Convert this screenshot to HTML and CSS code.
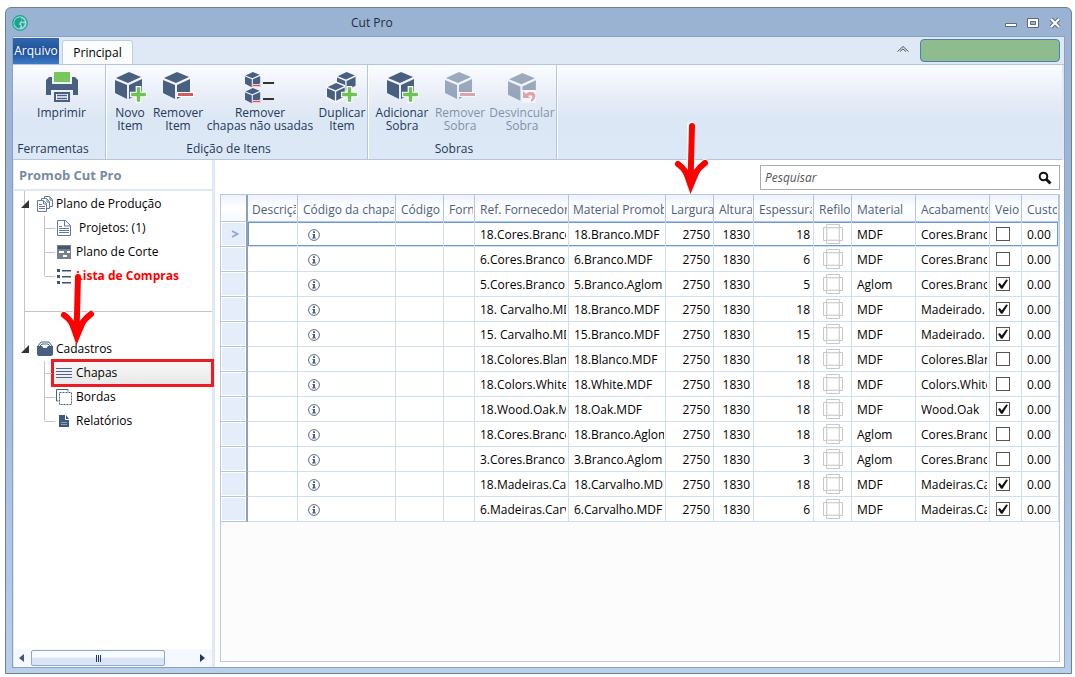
FILE: index.html
```html
<!DOCTYPE html>
<html lang="pt-BR">
<head>
<meta charset="utf-8">
<meta name="viewport" content="width=device-width, initial-scale=1">
<title>Cut Pro</title>
<link rel="stylesheet" href="styles.css">
</head>
<body>
<svg class="defs" aria-hidden="true">
  <symbol id="cube" viewBox="0 0 32 32"><path d="M1 6 14 0l12 5-13 6z"/><path d="M0 8l12 5v14L0 21z"/><path d="M14 13l13-6v13l-13 7z"/></symbol>
  <symbol id="plus" viewBox="0 0 15 15"><path d="M5 0h5v5h5v5h-5v5H5v-5H0V5h5z" fill="#fff"/><path d="M6 1h3v5h5v3H9v5H6V9H1V6h5z" fill="#71c255"/></symbol>
  <symbol id="info" viewBox="0 0 12 12"><circle cx="6" cy="6" r="5.4" fill="#fff" stroke="#5b6c8a"/><path d="M5 2.3h2v1.6H5zM4.2 5H7v3.6h.9v.9H4.1v-.9H5V5.8h-.8z" fill="#4f6180"/></symbol>
  <symbol id="trim" viewBox="0 0 20 20"><path d="M3.500 .5h13v19h-13zM.5 3.500h19v13H.5z" fill="none" stroke="#c8c8c8"/><path d="M4 4h12v12H4z" fill="#fff" stroke="#ddd"/></symbol>
  <symbol id="arrow" viewBox="0 0 34 74"><g fill="none" stroke-linecap="round" stroke-linejoin="round"><path d="M17 5L16.500 64M4 43c5 4 9 9 12.500 21C20 54 24 47 31 42" stroke="#fff" stroke-width="8"/><path d="M18 5L16.500 62M4 43c6 4 10 9 12.500 20C19 54 23 48 31 42" stroke="#f00" stroke-width="6"/></g><path d="M6 43l10.500 30L29 43 17 54z" fill="#f00"/></symbol>
</svg>
<div class="window">
  <header class="titlebar">
    <svg class="logo" viewBox="0 0 16 16"><circle cx="8" cy="8" r="7.300" fill="#a9d3d4" stroke="#13a58f" stroke-width="1.200"/><path d="M7 2.500c-3 .5-4.800 2.800-4.700 5.500.2 2.800 2.200 5 5 5.500l1.500-3-2-1 1-2 2-2.500-.8-2.500z" fill="#13a58f"/><path d="M9.500 3l3.500 3-3 1zM9 8l4 .5-2.500 4z" fill="#13a58f"/></svg>
    <h1 class="title">Cut Pro</h1>
    <div class="window-buttons">
      <button class="window-button" aria-label="Minimizar"><svg viewBox="0 0 14 12"><path d="M1.500 6.500h11v3h-11z" fill="#fff" stroke="#5c6b80"/></svg></button>
      <button class="window-button" aria-label="Maximizar"><svg viewBox="0 0 14 12"><path d="M1.500 1.500h11v9h-11z" fill="#fff" stroke="#5c6b80"/><path d="M4.500 4.500h5v3h-5z" fill="#9cb4d3" stroke="#5c6b80"/></svg></button>
      <button class="window-button" aria-label="Fechar"><svg viewBox="0 0 14 12"><path d="M3 2l8 8M11 2l-8 8" stroke="#5c6b80" stroke-width="4"/><path d="M3 2l8 8M11 2l-8 8" stroke="#fff" stroke-width="2.200"/></svg></button>
    </div>
  </header>
  <div class="client">
    <nav class="tabs">
      <button class="tab tab-file">Arquivo</button>
      <button class="tab tab-active">Principal</button>
      <button class="collapse" aria-label="Recolher faixa"><svg viewBox="0 0 14 8"><path d="M1.500 6.500L7 1.500l5.500 5M4 6.500l3-2.500 3 2.500" fill="none" stroke="#555"/></svg></button>
      <button class="account" aria-label="Conta"></button>
    </nav>
    <section class="ribbon">
      <div class="group group-tools">
        <div class="commands">
          <button class="command">
            <svg class="command-icon" viewBox="0 0 36 34"><path d="M10 1h16v10H10z" fill="#78c65c"/><path d="M5 6h3v7h20V6h3l3 3v15h-5v-5H7v5H2V9z" fill="#495f80"/><path d="M10 21h16v10H10z" fill="#495f80"/><path d="M12 23h12v6H12z" fill="#f4f7fc"/><path d="M13 24.500h10M13 27.500h10" stroke="#495f80" stroke-width="1.500"/></svg>
            <span>Imprimir</span></button>
        </div>
        <div class="group-label">Ferramentas</div>
      </div>
      <div class="group group-items">
        <div class="commands">
          <button class="command"><svg class="command-icon" viewBox="0 0 36 34"><use href="#cube" x="3" y="1" width="32" height="32"/><use href="#plus" x="18" y="15" width="17" height="17"/></svg><span>Novo<br>Item</span></button>
          <button class="command command-medium"><svg class="command-icon" viewBox="0 0 36 34"><use href="#cube" x="3" y="1" width="32" height="32"/><path d="M17 21h17v5H17z" fill="#fff"/><path d="M18 22h15v3H18z" fill="#d15c5c"/></svg><span>Remover<br>Item</span></button>
          <button class="command command-wide"><svg class="command-icon" viewBox="0 0 36 34"><use href="#cube" x="3" y="1" width="18" height="18"/><use href="#cube" x="3" y="17" width="18" height="18"/><path d="M10 13h9v3h-9zM10 29h9v3h-9z" fill="#f2c8cc"/><path d="M11 14h7v1h-7zM11 30h7v1h-7z" fill="#d15c5c"/><path d="M21 11h11v2H21zM21 27h11v2H21z" fill="#333"/></svg><span>Remover<br>chapas não usadas</span></button>
          <button class="command command-medium"><svg class="command-icon" viewBox="0 0 36 34"><use href="#cube" x="13" y="1" width="22" height="22"/><g fill="#f5f8fd"><path d="M2 15l9-5 10 4v14l-9 4-10-4z"/></g><use href="#cube" x="3" y="12" width="21" height="21"/><use href="#plus" x="17" y="15" width="17" height="17"/></svg><span>Duplicar<br>Item</span></button>
        </div>
        <div class="group-label">Edição de Itens</div>
      </div>
      <div class="group group-offcuts">
        <div class="commands">
          <button class="command command-large"><svg class="command-icon" viewBox="0 0 36 34"><use href="#cube" x="3" y="1" width="32" height="32"/><use href="#plus" x="18" y="15" width="17" height="17"/></svg><span>Adicionar<br>Sobra</span></button>
          <button class="command command-medium" disabled><svg class="command-icon" viewBox="0 0 36 34"><use href="#cube" x="3" y="1" width="32" height="32"/><path d="M17 21h17v5H17z" fill="#fff"/><path d="M18 22h15v3H18z" fill="#d15c5c"/></svg><span>Remover<br>Sobra</span></button>
          <button class="command command-xlarge" disabled><svg class="command-icon" viewBox="0 0 36 34"><use href="#cube" x="4" y="2" width="33" height="33"/><path d="M18 19h14v13H18z" fill="#fff"/><path d="M19 20v7h7l-2-2c4-2 6 1 3 4v2c6-3 6-11-1-10-2 0-3 1-4 2z" fill="#d15c5c"/></svg><span>Desvincular<br>Sobra</span></button>
        </div>
        <div class="group-label">Sobras</div>
      </div>
    </section>
    <div class="workspace">
      <aside class="sidebar">
        <h2 class="sidebar-title">Promob Cut Pro</h2>
        <div class="tree">
          <div class="branch">
            <a class="node node-root" href="#"><svg class="twisty" viewBox="0 0 8 8"><path d="M8 0v8H0z" fill="#333"/></svg><svg class="node-icon" viewBox="0 0 16 16"><g fill="#fff" stroke="#64799c"><path d="M7.500.5h5l3 3v7h-8z"/><path d="M4.500 2.500h5l3 3v7h-8z"/><path d="M.5 4.500h6l3 3v8h-9z"/><path d="M6.500 5v3h3M2 8.500h3M2 10.500h6M2 12.500h6M10 3v3h2.500M13 1v3h2.500" fill="none"/></g></svg><span>Plano de Produção</span></a>
            <div class="children">
              <a class="node node-spaced" href="#"><svg class="node-icon" viewBox="0 0 16 16"><path d="M1.500.5h8l5 5v10h-13z" fill="#fff" stroke="#64799c"/><path d="M8.500 1v5h6M3 6.500h3M3 8.500h10M3 10.500h10M3 12.500h10" fill="none" stroke="#64799c"/></svg><span>Projetos: (1)</span></a>
              <a class="node" href="#"><svg class="node-icon" viewBox="0 0 16 16"><path d="M1 1h14v14H1z" fill="#777f8b"/><path d="M2 2h12v3H2z" fill="#435574"/><path d="M3 7h5v2H3zM11 7h3v2h-3zM7 11h4v2H7z" fill="#fff"/></svg><span>Plano de Corte</span></a>
              <a class="node node-alert" href="#"><svg class="node-icon" viewBox="0 0 16 16"><path d="M1 1h3v3H1zM1 7h3v3H1zM1 13h3v3H1zM6 2h9v1.500H6zM6 8h9v1.500H6zM6 14h9v1.500H6z" fill="#40536f"/></svg><span>Lista de Compras</span><svg class="pointer pointer-list" aria-hidden="true"><use href="#arrow"/></svg></a>
            </div>
          </div>
          <hr class="tree-divider">
          <div class="branch branch-last">
            <a class="node node-root" href="#"><svg class="twisty" viewBox="0 0 8 8"><path d="M8 0v8H0z" fill="#333"/></svg><svg class="node-icon" viewBox="0 0 16 16"><path d="M1 5l3-4h8l3 4" fill="#fff" stroke="#495f80"/><path d="M3 5l2-2h6l2 2" fill="none" stroke="#495f80"/><path d="M0 5h5l1.500 2h3L11 5h5v8a2 2 0 0 1-2 2H2a2 2 0 0 1-2-2z" fill="#495f80"/></svg><span>Cadastros</span></a>
            <div class="children">
              <a class="node node-selected" href="#"><svg class="node-icon" viewBox="0 0 16 16"><path d="M0 3.500h16M0 6.500h16M0 9.500h16M0 12.500h16" stroke="#4b658c"/></svg><span>Chapas</span></a>
              <a class="node" href="#"><svg class="node-icon" viewBox="0 0 16 16"><path d="M3.500 3.500h12v12h-12z" fill="#fff" stroke="#495f80" stroke-dasharray="2 1"/><path d="M12 .5H.5V12h2M12 .5v2" fill="none" stroke="#495f80"/></svg><span>Bordas</span></a>
              <a class="node" href="#"><svg class="node-icon" viewBox="0 0 16 16"><path d="M3 2h6v5h4v7H3z" fill="#40587c"/><path d="M10 2l3 4h-3z" fill="#40587c"/><path d="M5 9.500h6M5 11.500h6" stroke="#8ea0bb"/></svg><span>Relatórios</span></a>
            </div>
          </div>
        </div>
        <div class="scrollbar">
          <button class="scroll-arrow" aria-label="Rolar para a esquerda"><svg viewBox="0 0 5 8"><path d="M5 0v8L0 4z" fill="#40587c"/></svg></button>
          <div class="scroll-track"><div class="scroll-thumb"><i></i><i></i><i></i></div></div>
          <button class="scroll-arrow" aria-label="Rolar para a direita"><svg viewBox="0 0 5 8"><path d="M0 0v8l5-4z" fill="#203a5f"/></svg></button>
        </div>
      </aside>
      <main class="content">
        <form class="search"><input class="search-input" id="search" type="text" placeholder="Pesquisar" aria-label="Pesquisar"><button class="search-button" type="button" aria-label="Buscar"><svg viewBox="0 0 14 14"><circle cx="5.500" cy="5.500" r="3.800" fill="none" stroke="#111" stroke-width="2"/><path d="M8.500 8.500l4 4" stroke="#111" stroke-width="3"/></svg></button></form>
        <div class="grid">
          <table class="sheet">
            <colgroup><col class="w-select"><col class="w-desc"><col class="w-sheet"><col class="w-code"><col class="w-supplier"><col class="w-ref"><col class="w-promob"><col class="w-code"><col class="w-height"><col class="w-thick"><col class="w-trim"><col class="w-material"><col class="w-finish"><col class="w-grain"><col></colgroup>
            <thead><tr><th></th><th class="tight">Descrição</th><th>Código da chapa</th><th>Código</th><th>Fornecedor</th><th>Ref. Fornecedor</th><th class="tight">Material Promob</th><th><span>Largura</span><svg class="pointer pointer-width" aria-hidden="true"><use href="#arrow"/></svg></th><th>Altura</th><th>Espessura</th><th>Refilo</th><th>Material</th><th>Acabamento</th><th>Veio</th><th>Custo</th></tr></thead>
            <tbody>
              <tr class="current"><th scope="row"><svg class="marker" viewBox="0 0 8 8"><path d="M1 1l5.500 3L1 7" fill="none" stroke="#8ea9cf" stroke-width="1.800"/></svg></th><td></td><td><svg class="info"><use href="#info"/></svg></td><td></td><td></td><td>18.Cores.Branco.MDF</td><td>18.Branco.MDF</td><td class="num">2750</td><td class="num">1830</td><td class="num">18</td><td class="mid"><svg class="trim"><use href="#trim"/></svg></td><td>MDF</td><td>Cores.Branco</td><td class="mid"><input class="tick" type="checkbox" aria-label="Veio"></td><td>0.00</td></tr>
              <tr><th scope="row"></th><td></td><td><svg class="info"><use href="#info"/></svg></td><td></td><td></td><td>6.Cores.Branco.MDF</td><td>6.Branco.MDF</td><td class="num">2750</td><td class="num">1830</td><td class="num">6</td><td class="mid"><svg class="trim"><use href="#trim"/></svg></td><td>MDF</td><td>Cores.Branco</td><td class="mid"><input class="tick" type="checkbox" aria-label="Veio"></td><td>0.00</td></tr>
              <tr><th scope="row"></th><td></td><td><svg class="info"><use href="#info"/></svg></td><td></td><td></td><td>5.Cores.Branco.Aglom</td><td>5.Branco.Aglom</td><td class="num">2750</td><td class="num">1830</td><td class="num">5</td><td class="mid"><svg class="trim"><use href="#trim"/></svg></td><td>Aglom</td><td>Cores.Branco</td><td class="mid"><input class="tick" type="checkbox" aria-label="Veio" checked></td><td>0.00</td></tr>
              <tr><th scope="row"></th><td></td><td><svg class="info"><use href="#info"/></svg></td><td></td><td></td><td>18. Carvalho.MDF</td><td>18.Branco.MDF</td><td class="num">2750</td><td class="num">1830</td><td class="num">18</td><td class="mid"><svg class="trim"><use href="#trim"/></svg></td><td>MDF</td><td>Madeirado. Carvalho</td><td class="mid"><input class="tick" type="checkbox" aria-label="Veio" checked></td><td>0.00</td></tr>
              <tr><th scope="row"></th><td></td><td><svg class="info"><use href="#info"/></svg></td><td></td><td></td><td>15. Carvalho.MDF</td><td>15.Branco.MDF</td><td class="num">2750</td><td class="num">1830</td><td class="num">15</td><td class="mid"><svg class="trim"><use href="#trim"/></svg></td><td>MDF</td><td>Madeirado. Carvalho</td><td class="mid"><input class="tick" type="checkbox" aria-label="Veio" checked></td><td>0.00</td></tr>
              <tr><th scope="row"></th><td></td><td><svg class="info"><use href="#info"/></svg></td><td></td><td></td><td>18.Colores.Blanco</td><td>18.Blanco.MDF</td><td class="num">2750</td><td class="num">1830</td><td class="num">18</td><td class="mid"><svg class="trim"><use href="#trim"/></svg></td><td>MDF</td><td>Colores.Blanco</td><td class="mid"><input class="tick" type="checkbox" aria-label="Veio"></td><td>0.00</td></tr>
              <tr><th scope="row"></th><td></td><td><svg class="info"><use href="#info"/></svg></td><td></td><td></td><td>18.Colors.White.MDF</td><td>18.White.MDF</td><td class="num">2750</td><td class="num">1830</td><td class="num">18</td><td class="mid"><svg class="trim"><use href="#trim"/></svg></td><td>MDF</td><td>Colors.White</td><td class="mid"><input class="tick" type="checkbox" aria-label="Veio"></td><td>0.00</td></tr>
              <tr><th scope="row"></th><td></td><td><svg class="info"><use href="#info"/></svg></td><td></td><td></td><td>18.Wood.Oak.MDF</td><td>18.Oak.MDF</td><td class="num">2750</td><td class="num">1830</td><td class="num">18</td><td class="mid"><svg class="trim"><use href="#trim"/></svg></td><td>MDF</td><td>Wood.Oak</td><td class="mid"><input class="tick" type="checkbox" aria-label="Veio" checked></td><td>0.00</td></tr>
              <tr><th scope="row"></th><td></td><td><svg class="info"><use href="#info"/></svg></td><td></td><td></td><td>18.Cores.Branco.Aglom</td><td>18.Branco.Aglom</td><td class="num">2750</td><td class="num">1830</td><td class="num">18</td><td class="mid"><svg class="trim"><use href="#trim"/></svg></td><td>Aglom</td><td>Cores.Branco</td><td class="mid"><input class="tick" type="checkbox" aria-label="Veio"></td><td>0.00</td></tr>
              <tr><th scope="row"></th><td></td><td><svg class="info"><use href="#info"/></svg></td><td></td><td></td><td>3.Cores.Branco.Aglom</td><td>3.Branco.Aglom</td><td class="num">2750</td><td class="num">1830</td><td class="num">3</td><td class="mid"><svg class="trim"><use href="#trim"/></svg></td><td>Aglom</td><td>Cores.Branco</td><td class="mid"><input class="tick" type="checkbox" aria-label="Veio"></td><td>0.00</td></tr>
              <tr><th scope="row"></th><td></td><td><svg class="info"><use href="#info"/></svg></td><td></td><td></td><td>18.Madeiras.Carvalho</td><td>18.Carvalho.MDF</td><td class="num">2750</td><td class="num">1830</td><td class="num">18</td><td class="mid"><svg class="trim"><use href="#trim"/></svg></td><td>MDF</td><td>Madeiras.Carvalho</td><td class="mid"><input class="tick" type="checkbox" aria-label="Veio" checked></td><td>0.00</td></tr>
              <tr><th scope="row"></th><td></td><td><svg class="info"><use href="#info"/></svg></td><td></td><td></td><td>6.Madeiras.Carvalho</td><td>6.Carvalho.MDF</td><td class="num">2750</td><td class="num">1830</td><td class="num">6</td><td class="mid"><svg class="trim"><use href="#trim"/></svg></td><td>MDF</td><td>Madeiras.Carvalho</td><td class="mid"><input class="tick" type="checkbox" aria-label="Veio" checked></td><td>0.00</td></tr>
            </tbody>
          </table>
        </div>
      </main>
    </div>
  </div>
</div>
</body>
</html>
```
FILE: styles.css
```css
* { box-sizing: border-box; }

body {
  margin: 0;
  padding: 7px 3px 3px 5px;
  height: 100vh;
  background: #fff;
  color: #000;
  font: 12px/16px "Open Sans", "Noto Sans", sans-serif;
}

button {
  margin: 0;
  padding: 0;
  border: 0;
  background: none;
  color: inherit;
  font: inherit;
}

svg { display: block; flex: none; }
.defs { position: absolute; width: 0; height: 0; }

.window {
  display: flex;
  flex-direction: column;
  height: 100%;
  padding: 0 6px 5px;
  border: 1px solid #747f8e;
  border-radius: 6px 6px 0 0;
  background: linear-gradient(#9ab3d2, #9fb9d8 50%, #b8d0ec);
}

.titlebar { display: flex; align-items: center; height: 28px; padding-top: 2px; color: #1e2a3c; }
.logo { width: 16px; height: 16px; }
.title { margin: 0 0 0 323px; font-size: 12px; font-weight: 400; }
.window-buttons { display: flex; gap: 8px; margin-left: auto; padding-right: 3px; }
.window-button { width: 14px; height: 12px; }

.client {
  display: flex;
  flex: 1;
  flex-direction: column;
  min-height: 0;
  border: 1px solid #8ba1bf;
  background: #dfe8f5;
}

.tabs { display: flex; align-items: flex-end; height: 28px; padding-right: 4px; border-bottom: 1px solid #b4c5dc; }
.tab { height: 26px; }
.tab-file { width: 46px; background: linear-gradient(#3168ad, #1f4f98 50%, #3c7bc6); color: #fff; }
.tab-active { width: 71px; height: 24px; margin-left: 3px; border: 1px solid #bfcde2; border-bottom: 0; border-radius: 3px 3px 0 0; background: #fbfcfe; }
.collapse { width: 14px; height: 8px; margin: 0 10px 11px auto; }
.account { width: 140px; height: 23px; margin-bottom: 2px; border: 1px solid #4682b4; border-radius: 4px; background: #8fbc8f; }

.ribbon {
  display: flex;
  height: 95px;
  margin-right: 2px;
  border-bottom: 1px solid #b4c5dc;
  background: linear-gradient(#fafcff, #e4ebf6 40%, #dbe7f5 60%, #dce8f5);
  color: #1e395b;
}
.group { display: flex; flex-direction: column; border-right: 1px solid #b4c5dc; box-shadow: 1px 0 #fff; }
.group-tools { width: 93px; }
.group-items { width: 262px; }
.group-offcuts { width: 189px; }
.commands { display: flex; flex: 1; gap: 1px; padding: 6px 0 0 3px; }
.group-tools .commands { justify-content: center; padding-left: 5px; }
.command { display: flex; flex: none; flex-direction: column; align-items: center; width: 42px; height: 64px; line-height: 13px; white-space: nowrap; }
.command-medium { width: 52px; }
.command-wide { width: 110px; }
.command-large { width: 62px; }
.command-xlarge { width: 70px; }
.command-icon { width: 36px; height: 34px; margin-bottom: 1px; fill: #495f80; }
.command:disabled { opacity: .5; }
.group-label { height: 18px; padding-right: 16px; text-align: center; }
.group-tools .group-label { padding-right: 12px; }

.workspace { display: flex; flex: 1; min-height: 0; }

.sidebar { display: flex; flex: none; flex-direction: column; width: 201px; margin-left: 1px; border-right: 3px solid #dfe8f5; background: #fff; }
.sidebar-title { margin: 0; height: 31px; padding: 7px 5px 0; border-bottom: 2px solid #dfe8f5; color: #788ba3; font-size: 13px; font-weight: 700; }
.tree { flex: 1; padding-left: 7px; }
.branch:first-child { padding-top: 1px; }
.node { display: flex; position: relative; align-items: center; gap: 4px; height: 24px; color: #000; text-decoration: none; white-space: nowrap; }
.node-icon { width: 16px; height: 16px; }
.node-root { gap: 3px; }
.twisty { width: 8px; height: 8px; }
.node-root .node-icon { margin-left: 5px; }
.branch { position: relative; }
.branch::before { content: ""; position: absolute; left: 3px; top: 0; bottom: 0; border-left: 1px solid #c4c4c4; }
.branch-last::before { bottom: auto; height: 12px; }
.children { position: relative; margin-left: 23px; padding-left: 12px; }
.children::before { content: ""; position: absolute; left: 0; top: 0; bottom: 12px; border-left: 1px solid #c4c4c4; }
.children .node::before { content: ""; position: absolute; left: -11px; top: 12px; width: 10px; border-top: 1px solid #c4c4c4; }
.node-spaced { gap: 7px; }
.node-alert { color: #f00; font-weight: 700; }
.node-selected { margin-left: -3px; outline: 3px solid #ec1c24; outline-offset: -1px; padding-left: 3px; background: linear-gradient(#f8f8f8, #e8e8e8); }
.tree-divider { height: 49px; margin: 0; margin-left: 3px; border: 0; border-left: 1px solid #c4c4c4; background: linear-gradient(#c4c4c4, #c4c4c4) 0 23px / 100% 1px no-repeat; }
.children .node-selected::before { left: -8px; width: 7px; }

.scrollbar { display: flex; align-items: center; height: 18px; padding: 0 5px; background: #f5f8fe; }
.scroll-arrow { width: 7px; height: 8px; }
.scroll-arrow svg { width: 5px; height: 8px; }
.scroll-track { flex: 1; padding: 0 5px; }
.scroll-thumb { display: flex; align-items: center; justify-content: center; gap: 1px; width: 82%; height: 16px; border: 1px solid #91a7c6; border-radius: 2px; background: linear-gradient(#f7faff 45%, #d9e5f4 50%); }
.scroll-thumb i { width: 1px; height: 7px; background: #203a5f; }

.content { display: flex; flex: 1; flex-direction: column; min-width: 0; padding: 5px 4px 5px 5px; background: #fff; }
.search { display: flex; align-items: center; width: 300px; height: 25px; margin: 0 0 4px auto; border: 1px solid #ababab; }
.search-input { flex: 1; min-width: 0; padding: 0 4px; border: 0; outline: 0; background: none; font: inherit; }
.search-input::placeholder { color: #555; font-style: italic; opacity: 1; }
.search-button { width: 14px; height: 14px; margin-right: 7px; }

.grid { flex: 1; min-height: 0; border: 1px solid #b9cadf; background: #fcfcfc; }
.sheet { width: 100%; table-layout: fixed; border-spacing: 0; background: #fff; }
.w-select { width: 27px; }
.w-desc { width: 50px; }
.w-sheet { width: 98px; }
.w-code { width: 48px; }
.w-supplier { width: 31px; }
.w-ref { width: 94px; }
.w-promob { width: 97px; }
.w-height { width: 40px; }
.w-thick { width: 60px; }
.w-trim { width: 38px; }
.w-material { width: 64px; }
.w-finish { width: 74px; }
.w-grain { width: 32px; }

th, td { height: 25px; padding: 1px 1px 0 5px; border-right: 1px solid #cfdff2; border-bottom: 1px solid #cfdff2; font-weight: 400; text-align: left; white-space: nowrap; overflow: clip; overflow-clip-margin: content-box; }
thead th { position: relative; height: 27px; padding-top: 3px; border-color: #b4c5dc; background: linear-gradient(#edf2fb, #fff 50%, #f6f9fe); color: #4c607a; }
thead th.tight { padding-left: 4px; }
thead th:has(.pointer) { overflow: visible; }
tbody th { padding: 0 0 0 10px; border-right: 2px solid #8fa0b8; border-bottom-color: #b4c5dc; background: #e6edfa; box-shadow: inset 0 0 0 1px #fff; }
thead th:first-child { border-right: 2px solid #8fa0b8; }
td:nth-child(6), td:nth-child(13) { padding-right: 2px; }
.num { padding-right: 3px; text-align: right; }
.mid { padding: 0; text-align: center; }
.current td { box-shadow: inset 0 1px #6f98cc, inset 0 -1px #6f98cc; }
.current td:nth-child(2) { box-shadow: inset 1px 1px #6f98cc, inset 0 -1px #6f98cc; }
.current td:last-child { box-shadow: inset 0 1px #6f98cc, inset -1px -1px #6f98cc; }
.marker { width: 8px; height: 8px; }
.info { width: 12px; height: 12px; margin-left: 5px; }
.trim { width: 20px; height: 20px; margin: 0 auto; }
.tick { appearance: none; display: grid; place-items: center; width: 14px; height: 14px; margin: 0 auto 0 6px; border: 1px solid #555; background: #fff; }
.tick:checked::before { content: ""; width: 10px; height: 10px; background: #111; clip-path: polygon(0 50%, 18% 40%, 38% 65%, 82% 5%, 100% 10%, 45% 98%, 30% 98%); }

.pointer { position: absolute; width: 34px; height: 74px; z-index: 1; }
.pointer-list { left: 4px; top: 8px; }
.pointer-width { left: 8px; top: -74px; }
```
